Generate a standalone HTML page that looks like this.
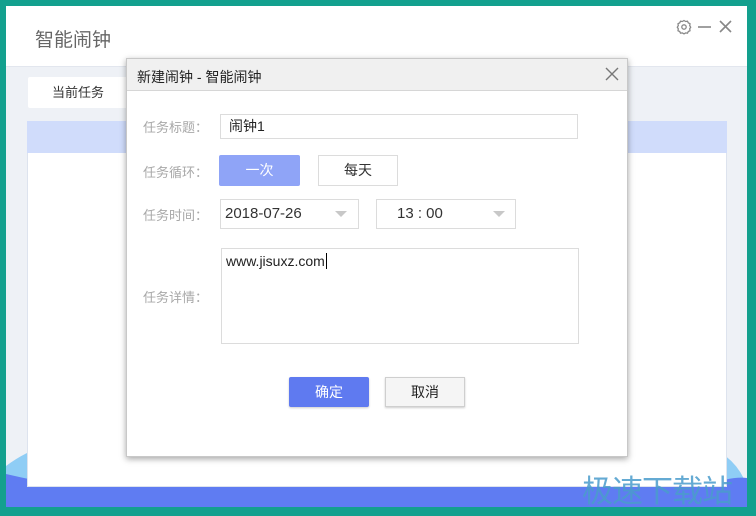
<!DOCTYPE html>
<html><head><meta charset="utf-8"><style>
*{margin:0;padding:0;box-sizing:border-box}
body{width:756px;height:516px;overflow:hidden;background:#13a08e;position:relative;font-family:"Liberation Sans","Noto Sans CJK SC",sans-serif}
.a{position:absolute}
.lbl{color:#a8a8a8;font-size:13px}
.box{border:1px solid #dcdcdc;background:#fff}
</style></head><body>
<div class="a" style="left:6px;top:6px;width:741px;height:501px;background:#eef1f6;overflow:hidden">
  <div class="a" style="left:0;top:0;width:741px;height:61px;background:#fff;border-bottom:1px solid #e2e6ee"></div>
  <div class="a" style="left:29px;top:19px;font-size:19px;color:#666">智能闹钟</div>
  <svg class="a" style="left:670px;top:12px" width="64" height="18" viewBox="0 0 64 18">
    <circle cx="8" cy="9" r="2.2" fill="none" stroke="#888" stroke-width="1.3"/>
    <path d="M8 2.5l1.6 1 1.9-.3.8 1.7 1.7.8-.3 1.9 1 1.6-1 1.6.3 1.9-1.7.8-.8 1.7-1.9-.3-1.6 1-1.6-1-1.9.3-.8-1.7-1.7-.8.3-1.9-1-1.6 1-1.6-.3-1.9 1.7-.8.8-1.7 1.9.3z" fill="none" stroke="#888" stroke-width="1.3"/>
    <path d="M22 9h13" stroke="#888" stroke-width="1.6"/>
    <path d="M44 3l11 11M55 3L44 14" stroke="#888" stroke-width="1.6"/>
  </svg>
  <div class="a" style="left:22px;top:71px;width:100px;height:31px;background:#fff;border-radius:2px;font-size:13px;color:#333;text-align:center;line-height:31px">当前任务</div>
  <svg class="a" style="left:0;top:420px" width="741" height="81" viewBox="0 0 741 81">
    <path d="M0 40 Q20 25 40 20 L40 81 L0 81Z" fill="#8fcdf5"/>
    <path d="M700 20 Q730 30 741 60 L741 81 L700 81Z" fill="#8fcdf5"/>
    <path d="M0 48 Q30 55 60 60 L700 60 Q725 50 741 52 L741 81 L0 81Z" fill="#5f7cf2"/>
  </svg>
  <div class="a" style="left:21px;top:115px;width:700px;height:366px;background:#fff;border:1px solid #dde3ee"></div>
  <div class="a" style="left:21px;top:115px;width:700px;height:32px;background:#d0dcfb"></div>
</div>
<div class="a" style="left:582px;top:466px;font-size:31px;color:#4a9ccc;opacity:.85;letter-spacing:-1px">极速下载站</div>
<div class="a" style="left:126px;top:58px;width:502px;height:399px;background:#fff;border:1px solid #c8c8c8;box-shadow:0 2px 6px rgba(0,0,0,.35)">
  <div class="a" style="left:0;top:0;width:500px;height:32px;background:#f0f0f0;border-bottom:1px solid #d6d6d6"></div>
  <div class="a" style="left:10px;top:8px;font-size:14px;color:#222">新建闹钟 - 智能闹钟</div>
  <svg class="a" style="left:478px;top:8px" width="14" height="14"><path d="M1 1l12 12M13 1L1 13" stroke="#777" stroke-width="1.4"/></svg>
  <div class="a lbl" style="left:16px;top:58px">任务标题：</div>
  <div class="a box" style="left:93px;top:55px;width:358px;height:25px;font-size:14px;color:#222;padding-left:8px;line-height:23px">闹钟1</div>
  <div class="a lbl" style="left:16px;top:103px">任务循环：</div>
  <div class="a" style="left:92px;top:96px;width:81px;height:31px;background:#8fa4f7;border-radius:2px;color:#fff;font-size:14px;text-align:center;line-height:31px">一次</div>
  <div class="a box" style="left:191px;top:96px;width:80px;height:31px;font-size:14px;color:#333;text-align:center;line-height:29px">每天</div>
  <div class="a lbl" style="left:16px;top:146px">任务时间：</div>
  <div class="a box" style="left:93px;top:140px;width:139px;height:30px;font-size:15px;color:#333;padding-left:4px;line-height:28px">2018-07-26</div>
  <svg class="a" style="left:208px;top:152px" width="12" height="6"><path d="M0 0h12L6 6z" fill="#c8c8c8"/></svg>
  <div class="a box" style="left:249px;top:140px;width:140px;height:30px;font-size:15px;color:#333;padding-left:20px;line-height:28px">13 : 00</div>
  <svg class="a" style="left:366px;top:152px" width="12" height="6"><path d="M0 0h12L6 6z" fill="#c8c8c8"/></svg>
  <div class="a lbl" style="left:16px;top:228px">任务详情：</div>
  <div class="a box" style="left:94px;top:189px;width:358px;height:96px;font-size:14px;color:#222;padding:4px 0 0 4px">www.jisuxz.com<span style="border-left:1px solid #000;margin-left:1px"></span></div>
  <div class="a" style="left:162px;top:318px;width:80px;height:30px;background:#5f7af0;border-radius:2px;color:#fff;font-size:14px;text-align:center;line-height:30px;box-shadow:0 1px 2px rgba(0,0,0,.2)">确定</div>
  <div class="a" style="left:258px;top:318px;width:80px;height:30px;background:#f5f5f5;border:1px solid #cfcfcf;color:#222;font-size:14px;text-align:center;line-height:28px;box-shadow:0 1px 2px rgba(0,0,0,.2)">取消</div>
</div>
</body></html>
